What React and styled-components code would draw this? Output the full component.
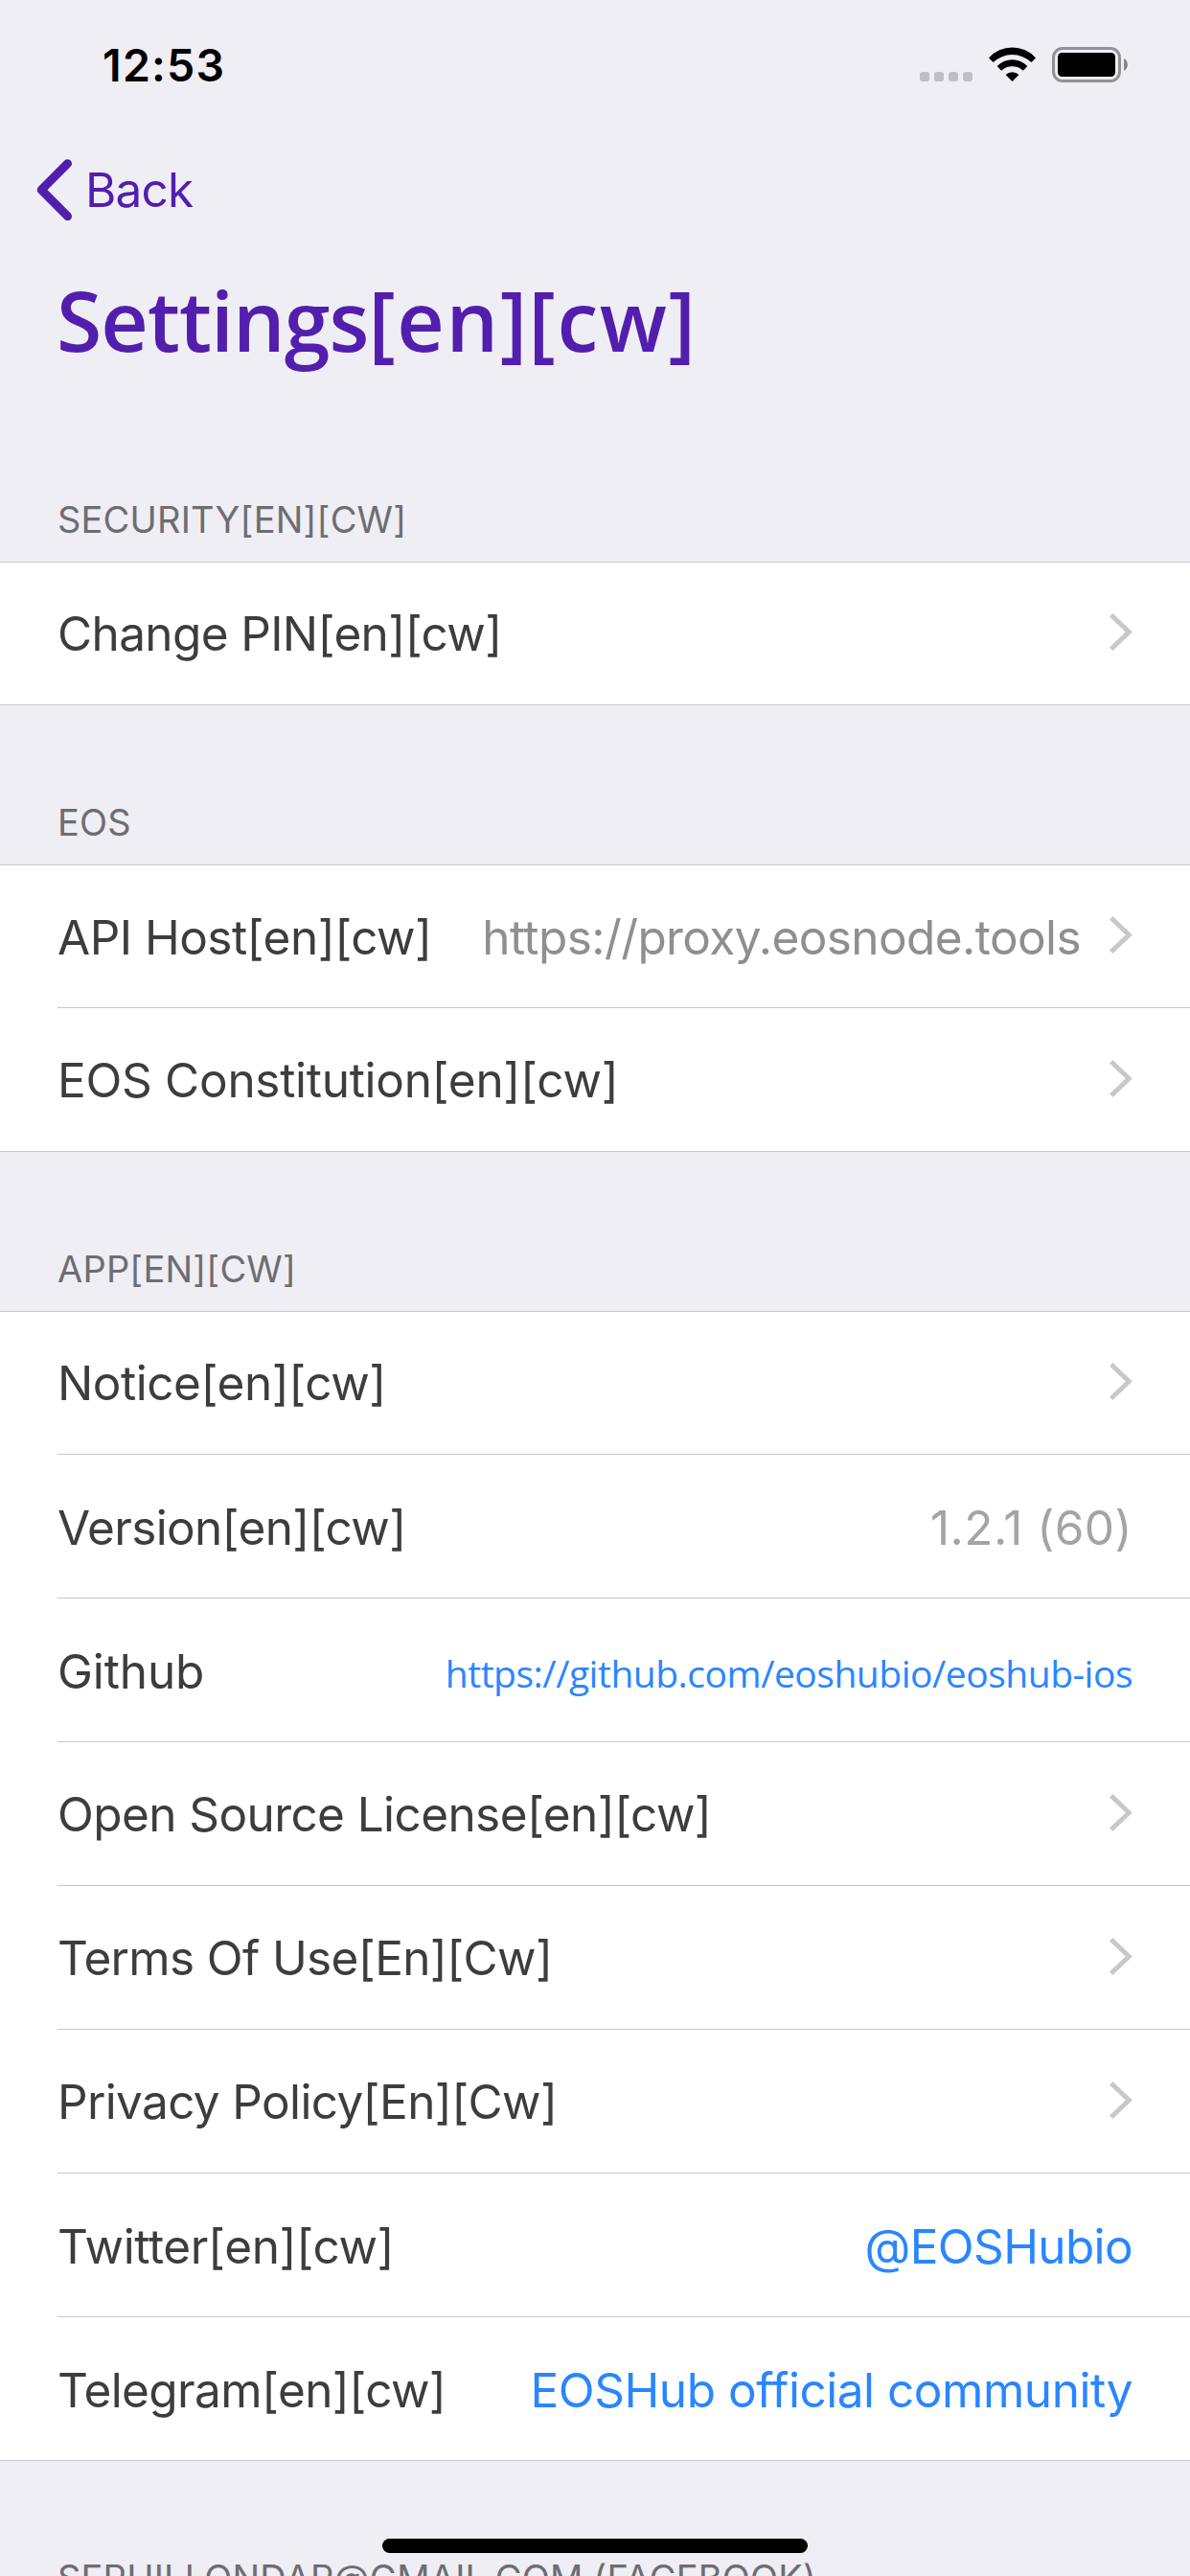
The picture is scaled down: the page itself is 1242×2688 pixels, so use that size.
import React from "react";
import styled, { createGlobalStyle } from "styled-components";

const colors = {
  background: "#efeef4",
  surface: "#ffffff",
  line: "#c8c7cc",
  accent: "#521ead",
  label: "#3d3d3d",
  header: "#6d6d72",
  detail: "#8e8e93",
  muted: "#a4a4a4",
  link: "#2a86ff",
};

const GlobalStyle = createGlobalStyle`
  body {
    margin: 0;
    background: ${colors.background};
    font-family: Inter, "Liberation Sans", sans-serif;
  }
`;

const Screen = styled.div`
  position: relative;
  box-sizing: border-box;
  width: 1242px;
  height: 2688px;
  overflow: hidden;
  background: ${colors.background};
`;

const StatusBar = styled.div`
  display: flex;
  justify-content: space-between;
  align-items: flex-start;
  box-sizing: border-box;
  height: 132px;
  padding: 40px 65px 0 107px;
`;

const Time = styled.span`
  font-size: 46.5px;
  font-weight: 600;
  line-height: 56px;
  letter-spacing: 1.22px;
  color: #000;
`;

const StatusIcons = styled.div`
  display: flex;
  align-items: flex-end;
  gap: 17px;
  padding-top: 9px;
`;

const SignalDots = styled.div`
  display: flex;
  gap: 5px;
  margin-bottom: 1px;
`;

const Dot = styled.i`
  width: 10px;
  height: 10px;
  border-radius: 3px;
  background: #bfbec4;
`;

const WifiSvg = styled.svg`
  display: block;
  margin-bottom: 1px;
`;

const BatterySvg = styled.svg`
  display: block;
`;

const NavBar = styled.nav`
  display: flex;
  align-items: center;
  height: 132px;
  padding-left: 38px;
`;

const BackButton = styled.a`
  display: flex;
  align-items: center;
  gap: 13px;
  color: ${colors.accent};
  font-size: 49.5px;
  line-height: 64px;
  letter-spacing: -0.85px;
`;

const Title = styled.h1`
  box-sizing: border-box;
  height: 156px;
  margin: 0;
  padding: 10px 0 0 59px;
  font-family: "Open Sans", "Noto Sans", sans-serif;
  font-size: 86px;
  font-weight: 600;
  line-height: 120px;
  letter-spacing: -0.95px;
  color: ${colors.accent};
`;

const TitleSuffix = styled.span`
  letter-spacing: 1.6px;
`;

const SectionHeader = styled.h2`
  display: flex;
  align-items: flex-end;
  box-sizing: border-box;
  height: 166px;
  margin: 0;
  padding: 0 60px 21px;
  font-size: 38px;
  font-weight: 400;
  line-height: 46px;
  letter-spacing: 0.2px;
  white-space: nowrap;
  color: ${colors.header};
`;

const List = styled.div`
  background: ${colors.surface};
  border-top: 1px solid ${colors.line};
  border-bottom: 1px solid ${colors.line};
`;

const Row = styled.div`
  display: flex;
  align-items: center;
  justify-content: space-between;
  height: 149px;
  margin-left: 60px;
  padding-right: 60px;
  white-space: nowrap;

  &:first-child {
    height: 148px;
  }

  & + & {
    border-top: 1px solid ${colors.line};
  }
`;

const Label = styled.span`
  padding-top: ${(p) => (p.$raised ? 0 : 2)}px;
  font-size: 49.5px;
  line-height: 64px;
  letter-spacing: ${(p) => p.$tracking}px;
  color: ${colors.label};
`;

const Trailing = styled.div`
  display: flex;
  align-items: center;
  gap: 30px;
`;

const Value = styled.span`
  padding-top: 2px;
  font-size: 49.5px;
  line-height: 64px;
  letter-spacing: ${(p) => p.$tracking}px;
  color: ${(p) => colors[p.$tone]};
`;

const SmallLink = styled.a`
  padding-top: 7px;
  font-family: "Open Sans", "Noto Sans", sans-serif;
  font-size: 39px;
  line-height: 54px;
  letter-spacing: -0.49px;
  color: ${colors.link};
`;

const ChevronSvg = styled.svg`
  display: block;
  padding-bottom: 3px;
`;

const HomeIndicator = styled.div`
  position: absolute;
  left: 399px;
  bottom: 24px;
  width: 444px;
  height: 15px;
  border-radius: 8px;
  background: #000;
`;

function Wifi() {
  return (
    <WifiSvg width="49" height="36" viewBox="0 0 49 36">
      <path d="M0 11.4A33 33 0 0 1 49 11.4L44.4 16.1A28.6 28.6 0 0 0 4.6 16.1Z" />
      <path d="M8.7 20.1A21.6 21.6 0 0 1 40.3 20.1L35.9 24.7A17 17 0 0 0 13.1 24.7Z" />
      <path d="M17.6 29A10 10 0 0 1 31.4 29L24.5 36Z" />
    </WifiSvg>
  );
}

function Battery() {
  return (
    <BatterySvg width="79" height="37" viewBox="0 0 79 37">
      <rect x="1.5" y="1.5" width="69" height="34" rx="9.5" fill="none" stroke="#929295" strokeWidth="3" />
      <rect x="6" y="6" width="60" height="25" rx="4.5" />
      <path d="M75 12C80.2 14.5 80.2 22.5 75 25Z" fill="#858588" />
    </BatterySvg>
  );
}

function BackChevron() {
  return (
    <svg width="38" height="64" viewBox="0 0 38 64">
      <path
        d="M32.5 4.7L5.2 32.2L32.5 59.7"
        fill="none"
        stroke={colors.accent}
        strokeWidth="9"
        strokeLinecap="round"
        strokeLinejoin="round"
      />
    </svg>
  );
}

function Chevron() {
  return (
    <ChevronSvg width="24" height="39" viewBox="0 0 24 39">
      <path d="M1.7 1.8L20.3 19.5L1.7 37.2" fill="none" stroke="#c7c7cc" strokeWidth="4.9" />
    </ChevronSvg>
  );
}

const sections = [
  {
    title: "SECURITY[EN][CW]",
    rows: [{ label: "Change PIN[en][cw]", tracking: -0.63, chevron: true }],
  },
  {
    title: "EOS",
    rows: [
      {
        label: "API Host[en][cw]",
        tracking: -0.52,
        value: "https://proxy.eosnode.tools",
        valueTracking: -0.59,
        tone: "detail",
        chevron: true,
      },
      { label: "EOS Constitution[en][cw]", tracking: -0.29, chevron: true },
    ],
  },
  {
    title: "APP[EN][CW]",
    rows: [
      { label: "Notice[en][cw]", tracking: -0.47, chevron: true },
      { label: "Version[en][cw]", tracking: -0.65, value: "1.2.1 (60)", valueTracking: 0.43, tone: "muted" },
      { label: "Github", tracking: -0.11, smallLink: "https://github.com/eoshubio/eoshub-ios" },
      { label: "Open Source License[en][cw]", tracking: -0.59, chevron: true },
      { label: "Terms Of Use[En][Cw]", tracking: -0.66, chevron: true },
      { label: "Privacy Policy[En][Cw]", tracking: -0.64, chevron: true },
      { label: "Twitter[en][cw]", tracking: -0.36, value: "@EOSHubio", valueTracking: -0.64, tone: "link" },
      {
        label: "Telegram[en][cw]",
        tracking: -0.61,
        value: "EOSHub official community",
        valueTracking: -0.47,
        tone: "link",
      },
    ],
  },
];

export default function App() {
  return (
    <>
      <GlobalStyle />
      <Screen>
        <StatusBar>
          <Time>12:53</Time>
          <StatusIcons>
            <SignalDots>
              <Dot />
              <Dot />
              <Dot />
              <Dot />
            </SignalDots>
            <Wifi />
            <Battery />
          </StatusIcons>
        </StatusBar>
        <NavBar>
          <BackButton>
            <BackChevron />
            Back
          </BackButton>
        </NavBar>
        <Title>
          Settings<TitleSuffix>[en][cw]</TitleSuffix>
        </Title>
        {sections.map((section) => (
          <section key={section.title}>
            <SectionHeader>{section.title}</SectionHeader>
            <List>
              {section.rows.map((row) => (
                <Row key={row.label}>
                  <Label $tracking={row.tracking} $raised={row.chevron && !row.value}>
                    {row.label}
                  </Label>
                  <Trailing>
                    {row.value && (
                      <Value $tone={row.tone} $tracking={row.valueTracking}>
                        {row.value}
                      </Value>
                    )}
                    {row.smallLink && <SmallLink>{row.smallLink}</SmallLink>}
                    {row.chevron && <Chevron />}
                  </Trailing>
                </Row>
              ))}
            </List>
          </section>
        ))}
        <SectionHeader>SERHII.LONDAR@GMAIL.COM (FACEBOOK)</SectionHeader>
        <HomeIndicator />
      </Screen>
    </>
  );
}
